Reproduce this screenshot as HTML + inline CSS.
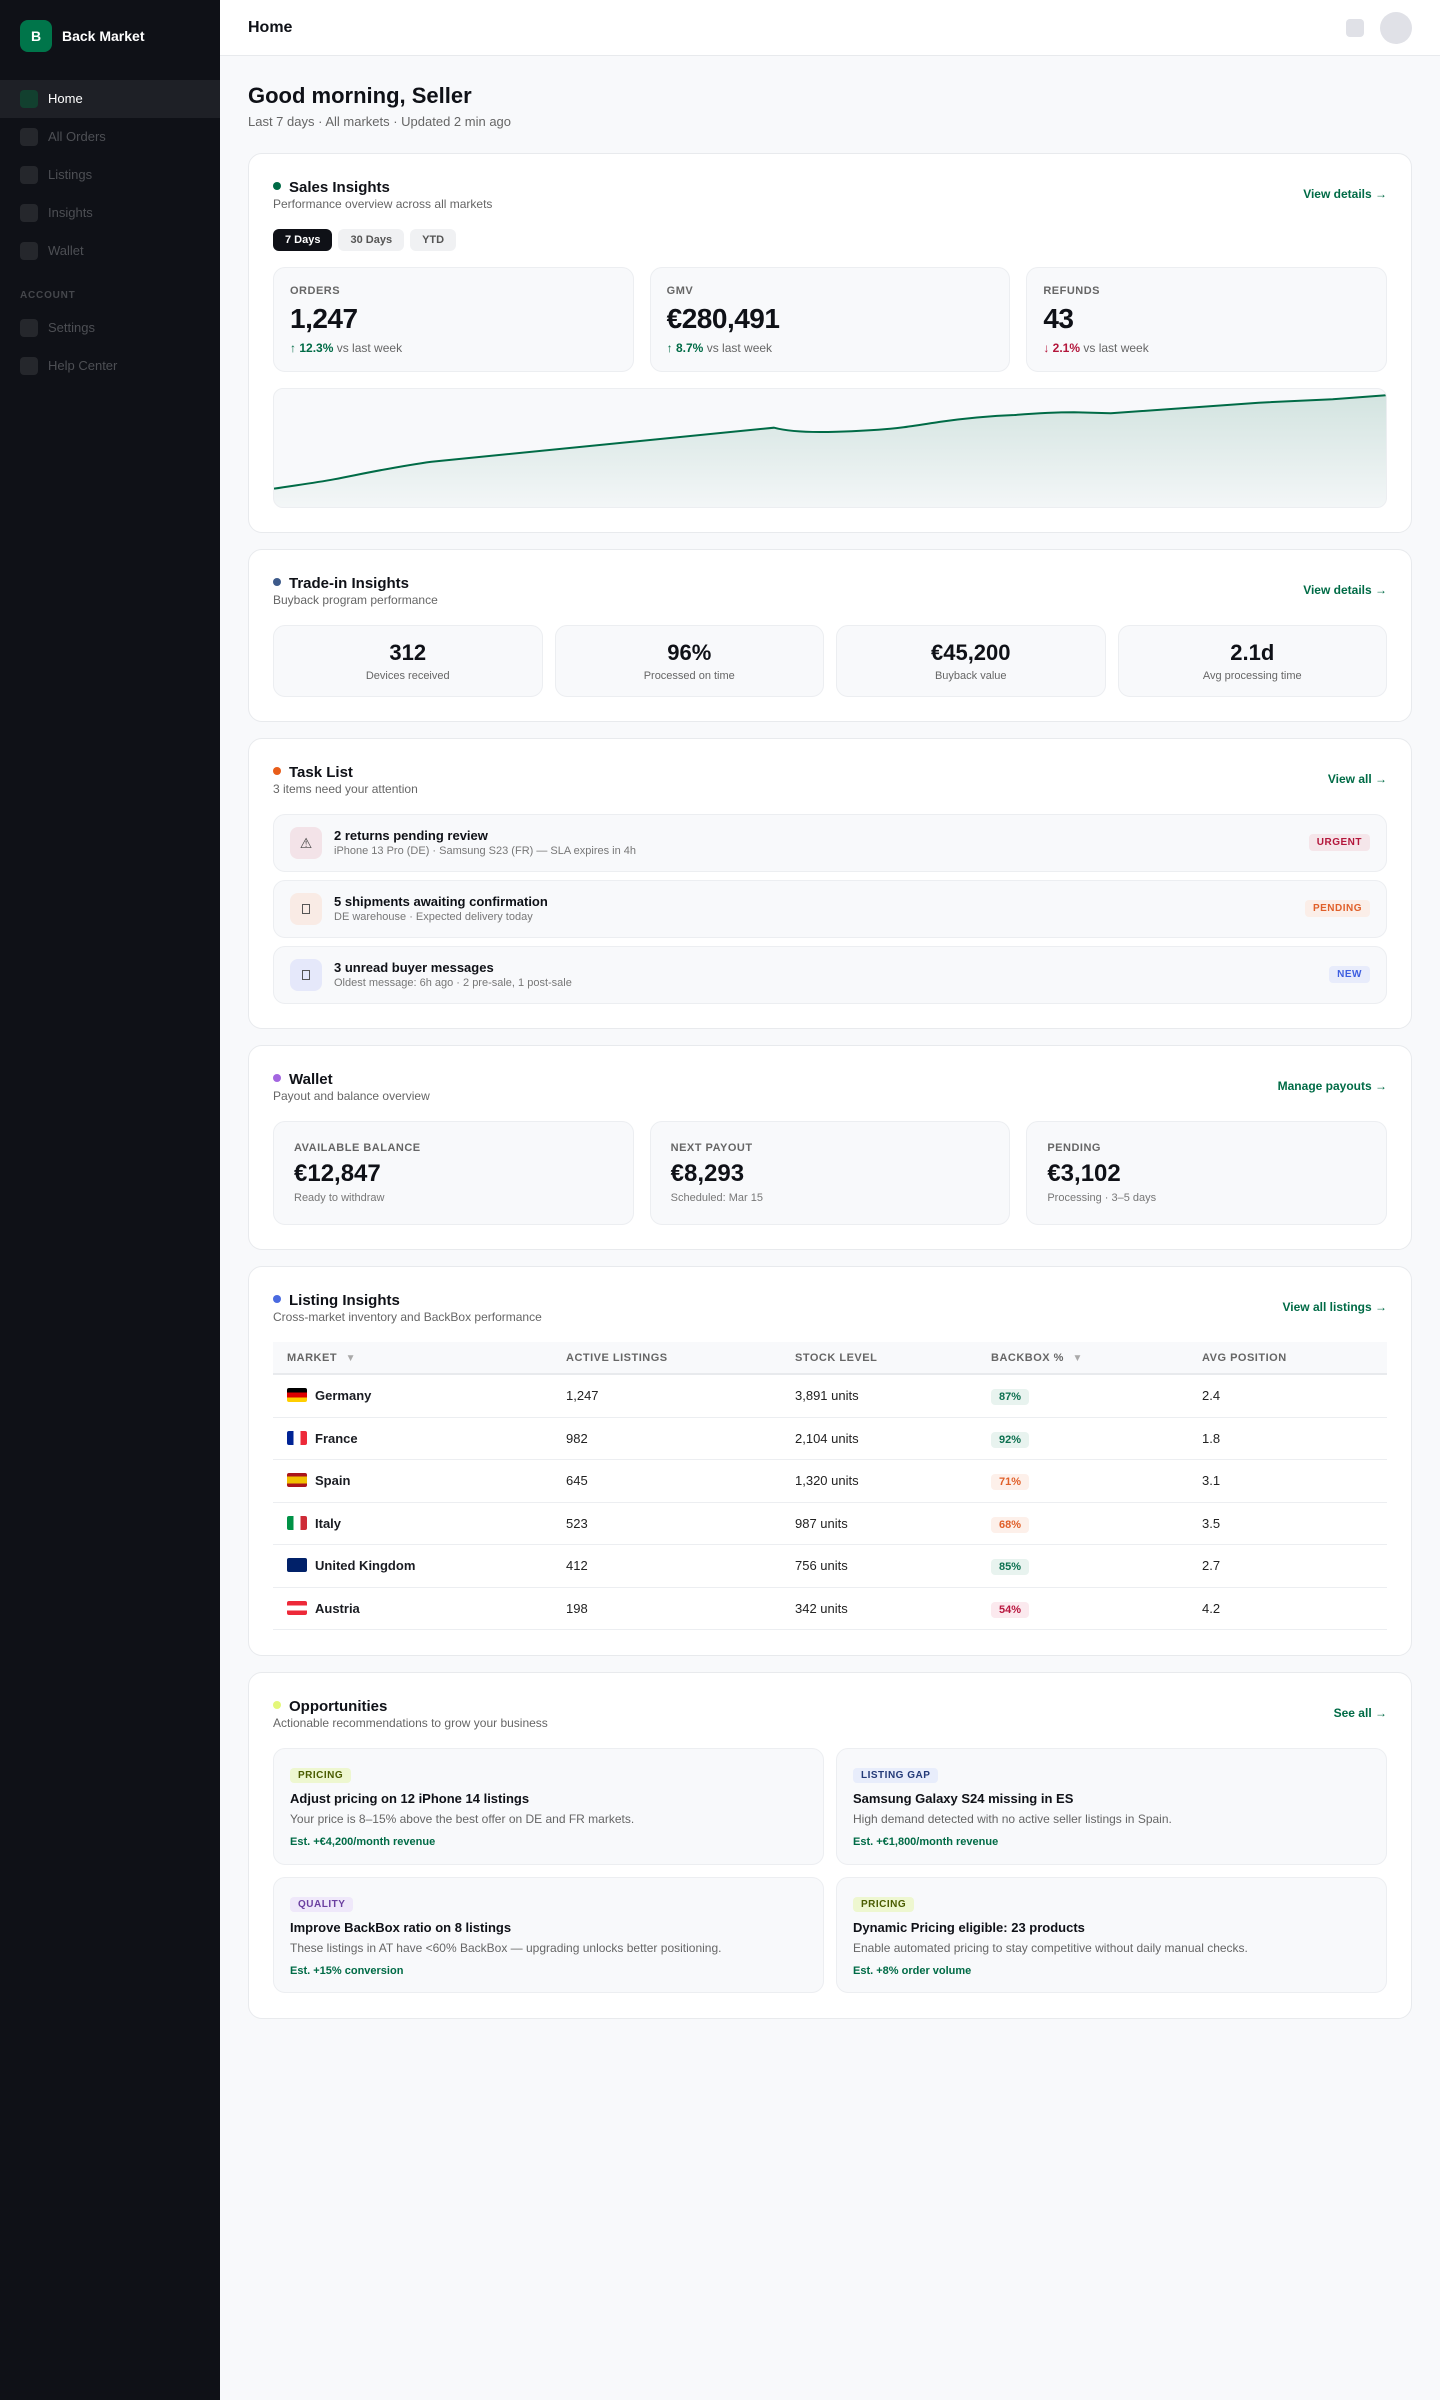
<!DOCTYPE html>
<html lang="en"><head><meta charset="utf-8"><title>Back Market</title>
<style>
*{box-sizing:border-box;margin:0;padding:0}
html,body{width:1440px;height:2400px;overflow:hidden;background:#f8f9fb;font-family:"Liberation Sans",Arial,sans-serif;color:#0f1117}
.side{position:absolute;left:0;top:0;width:220px;height:2400px;background:#0f1117}
.logo{position:absolute;left:20px;top:20px;width:32px;height:32px;border-radius:8px;background:#00754a;color:#fff;font:700 14px/32px "Liberation Sans",sans-serif;text-align:center}
.brand{position:absolute;left:62px;top:20px;line-height:32px;font-size:14px;font-weight:700;color:#fff}
.nav{position:absolute;left:0;width:220px;height:38px;font-size:13px;line-height:38px;color:#4d4f54;padding-left:48px}
.nav i{position:absolute;left:20px;top:10px;width:18px;height:18px;border-radius:4px;background:#25272c}
.nav.on{background:#1e2026;color:#fff}.nav.on i{background:#12402f}
.acc{position:absolute;left:20px;top:290px;font-size:10px;font-weight:700;letter-spacing:.8px;line-height:12px;color:#45474c}
.top{position:absolute;left:220px;top:0;width:1220px;height:56px;background:#fff;border-bottom:1px solid #e8eaed}
.top b{position:absolute;left:28px;top:0;font-size:16px;line-height:56px}
.top i{position:absolute;left:1126px;top:19px;width:18px;height:18px;border-radius:4px;background:#e0e1e7}
.top u{position:absolute;left:1160px;top:12px;width:32px;height:32px;border-radius:50%;background:#e0e1e7}
h1{position:absolute;left:248px;top:82px;font-size:22px;line-height:28px;font-weight:700}
.lead{position:absolute;left:248px;top:114px;font-size:13px;line-height:16px;color:#666}
.card{position:absolute;left:248px;width:1164px;background:#fff;border:1px solid #e8eaed;border-radius:14px;padding:24px}
.head{position:relative;height:35px;margin-bottom:16px}
.dot{position:absolute;left:0;top:4px;width:8px;height:8px;border-radius:50%}
.tt{position:absolute;left:16px;top:1px;font-size:15px;line-height:17px;font-weight:700}
.st{position:absolute;left:0;top:18px;font-size:12px;line-height:16px;color:#666}
.lnk{position:absolute;right:0;top:8px;font-size:12px;line-height:16px;font-weight:700;color:#006b46;white-space:nowrap}
.lnk span{font-weight:400}
.pills{display:flex;gap:6px;height:22px;margin-bottom:16px}
.pills span{height:22px;padding:0 12px;border-radius:6px;background:#f0f1f3;color:#555;font-size:11px;font-weight:700;line-height:22px}
.pills span.on{background:#0f1117;color:#fff}
.g3{display:grid;grid-template-columns:repeat(3,1fr);gap:16px}
.box{background:#f8f9fb;border:1px solid #eceef1;border-radius:12px;position:relative}
.m{height:105px;padding:16px}
.lbl{font-size:11px;font-weight:700;color:#666;letter-spacing:.5px;line-height:14px}
.val{font-size:28px;font-weight:700;letter-spacing:-.5px;line-height:34px;margin-top:4px}
.del{font-size:12px;color:#666;line-height:16px;margin-top:4px}
.del b{color:#006b46}.del b.r{color:#b3163b}.del s{text-decoration:none;color:#006b46}.del s.r{color:#b3163b}
.chart{height:120px;margin-top:16px;overflow:hidden;position:relative;border-radius:10px}
.chart svg{position:absolute;left:0;top:0}
.g4{display:grid;grid-template-columns:repeat(4,1fr);gap:12px}
.t{height:72px;text-align:center;padding-top:14px}
.t b{display:block;font-size:22px;line-height:26px}
.t span{display:block;font-size:11px;line-height:14px;color:#666;margin-top:3px}
.row{position:relative;height:58px;margin-bottom:8px}
.ic{position:absolute;left:16px;top:12px;width:32px;height:32px;border-radius:8px;text-align:center;font-size:14px;line-height:32px;color:#444}
.ic i{position:absolute;left:12px;top:11px;width:8px;height:10px;border:1px solid #555}
.rt{position:absolute;left:60px;top:13px;font-size:13px;font-weight:700;line-height:16px}
.rs{position:absolute;left:60px;top:29px;font-size:11px;line-height:14px;color:#777}
.bd{position:absolute;right:16px;top:19px;height:17px;padding:0 8px;border-radius:4px;font-size:10px;font-weight:700;letter-spacing:.5px;line-height:17px}
.w{height:104px;padding:19px 20px}
.w b{display:block;font-size:24px;line-height:28px;margin-top:5px}
.w span{display:block;font-size:11px;line-height:14px;color:#777;margin-top:3px}
.tb{position:relative;height:290px}
.th,.tr{position:absolute;left:0;width:1114px;font-size:13px}
.th{top:0;height:33px;background:#f8f9fb;border-bottom:2px solid #e8eaed;font-size:11px;font-weight:700;color:#666;letter-spacing:.5px;line-height:33px}
.tr{height:42.5px;border-bottom:1px solid #eceef1;line-height:42px;color:#222}
.th div,.tr div{position:absolute;top:0;white-space:nowrap}
.c1{left:14px}.c2{left:293px}.c3{left:522px}.c4{left:718px}.c5{left:929px}
.th em{font-style:normal;font-size:10px;color:#aaa;margin-left:5px;letter-spacing:0}
.tr .c1{font-weight:700;color:#1a1c22;padding-left:28px}
.fl{position:absolute;left:0;top:13px;width:20px;height:14px;border-radius:2px}
.pc{display:inline-block;height:16px;padding:0 8px;border-radius:4px;font-size:11px;font-weight:700;line-height:16px;vertical-align:0}
.gr{background:#e8f3ef;color:#0d7050}.or{background:#fdf0ea;color:#e0602a}.rd{background:#fbe9ee;color:#b8173f}
.g2{display:grid;grid-template-columns:1fr 1fr;column-gap:12px;row-gap:12px}
.o{height:116.5px;padding:19px 16px 0}
.tag{display:block;width:fit-content;height:15px;padding:0 8px;border-radius:4px;font-size:10px;font-weight:700;letter-spacing:.5px;line-height:15px}
.o h4{font-size:13px;line-height:16px;margin-top:8px}
.o p{font-size:12px;line-height:16px;color:#666;margin-top:4px}
.o small{display:block;font-size:11px;font-weight:700;color:#006b46;line-height:14px;margin-top:8px}
</style></head><body>
<div class="side">
<div class="logo">B</div><div class="brand">Back Market</div>
<div class="nav on" style="top:80px"><i></i>Home</div>
<div class="nav" style="top:118px"><i></i>All Orders</div>
<div class="nav" style="top:156px"><i></i>Listings</div>
<div class="nav" style="top:194px"><i></i>Insights</div>
<div class="nav" style="top:232px"><i></i>Wallet</div>
<div class="acc">ACCOUNT</div>
<div class="nav" style="top:309px"><i></i>Settings</div>
<div class="nav" style="top:347px"><i></i>Help Center</div>
</div>
<div class="top"><b>Home</b><i></i><u></u></div>
<h1>Good morning, Seller</h1>
<div class="lead">Last 7 days · All markets · Updated 2 min ago</div>

<div class="card" style="top:153px;height:380px">
<div class="head"><i class="dot" style="background:#006b46"></i><div class="tt">Sales Insights</div><div class="st">Performance overview across all markets</div><div class="lnk">View details <span>→</span></div></div>
<div class="pills"><span class="on">7 Days</span><span>30 Days</span><span>YTD</span></div>
<div class="g3">
<div class="box m"><div class="lbl">ORDERS</div><div class="val">1,247</div><div class="del"><s>↑</s> <b>12.3%</b> vs last week</div></div>
<div class="box m"><div class="lbl">GMV</div><div class="val">€280,491</div><div class="del"><s>↑</s> <b>8.7%</b> vs last week</div></div>
<div class="box m"><div class="lbl">REFUNDS</div><div class="val">43</div><div class="del"><s class="r">↓</s> <b class="r">2.1%</b> vs last week</div></div>
</div>
<div class="box chart">
<svg width="1112" height="118" viewBox="0 0 1112 118"><defs><linearGradient id="g" x1="0" y1="0" x2="0" y2="1"><stop offset="0" stop-color="#006b46" stop-opacity=".15"/><stop offset="1" stop-color="#006b46" stop-opacity=".02"/></linearGradient></defs>
<path d="M0 99.7C20 96.5 40 94 60 90.3C95 83.5 125 77 157.6 72.7L500 38.7C516 43 540 43.5 563 42.7C590 42 612 40.5 629.6 38.3C642 36.7 655 34.5 666.6 32.7C690 29.500 715 27 740.6 26C760 24.500 780 23.300 800 23.300L836.800 24.300L984.700 13.700L1058.700 10.300L1112 6.300V118H0Z" fill="url(#g)"/>
<path d="M0 99.7C20 96.5 40 94 60 90.3C95 83.5 125 77 157.6 72.7L500 38.7C516 43 540 43.5 563 42.7C590 42 612 40.5 629.6 38.3C642 36.7 655 34.5 666.6 32.7C690 29.500 715 27 740.6 26C760 24.500 780 23.300 800 23.300L836.800 24.300L984.700 13.700L1058.700 10.300L1112 6.300" fill="none" stroke="#006b46" stroke-width="2"/></svg>
</div>
</div>

<div class="card" style="top:549px;height:173px">
<div class="head"><i class="dot" style="background:#3d5a8a"></i><div class="tt">Trade-in Insights</div><div class="st">Buyback program performance</div><div class="lnk">View details <span>→</span></div></div>
<div class="g4">
<div class="box t"><b>312</b><span>Devices received</span></div>
<div class="box t"><b>96%</b><span>Processed on time</span></div>
<div class="box t"><b>€45,200</b><span>Buyback value</span></div>
<div class="box t"><b>2.1d</b><span>Avg processing time</span></div>
</div>
</div>

<div class="card" style="top:738px;height:291px">
<div class="head"><i class="dot" style="background:#e85d1a"></i><div class="tt">Task List</div><div class="st">3 items need your attention</div><div class="lnk">View all <span>→</span></div></div>
<div class="box row"><div class="ic" style="background:#f3e3e8">⚠</div><div class="rt">2 returns pending review</div><div class="rs">iPhone 13 Pro (DE) · Samsung S23 (FR) — SLA expires in 4h</div><div class="bd" style="background:#f5e6ea;color:#b3163b">URGENT</div></div>
<div class="box row"><div class="ic" style="background:#f9ebe5"><i></i></div><div class="rt">5 shipments awaiting confirmation</div><div class="rs">DE warehouse · Expected delivery today</div><div class="bd" style="background:#fbeee8;color:#e0602a">PENDING</div></div>
<div class="box row"><div class="ic" style="background:#e5e8fa"><i></i></div><div class="rt">3 unread buyer messages</div><div class="rs">Oldest message: 6h ago · 2 pre-sale, 1 post-sale</div><div class="bd" style="background:#e8ecfb;color:#3f5fe0">NEW</div></div>
</div>

<div class="card" style="top:1045px;height:205px">
<div class="head"><i class="dot" style="background:#a366e0"></i><div class="tt">Wallet</div><div class="st">Payout and balance overview</div><div class="lnk">Manage payouts <span>→</span></div></div>
<div class="g3">
<div class="box w"><div class="lbl">AVAILABLE BALANCE</div><b>€12,847</b><span>Ready to withdraw</span></div>
<div class="box w"><div class="lbl">NEXT PAYOUT</div><b>€8,293</b><span>Scheduled: Mar 15</span></div>
<div class="box w"><div class="lbl">PENDING</div><b>€3,102</b><span>Processing · 3–5 days</span></div>
</div>
</div>

<div class="card" style="top:1266px;height:390px">
<div class="head"><i class="dot" style="background:#4a6ae0"></i><div class="tt">Listing Insights</div><div class="st">Cross-market inventory and BackBox performance</div><div class="lnk">View all listings <span>→</span></div></div>
<div class="tb">
<div class="th"><div class="c1">MARKET <em>▼</em></div><div class="c2">ACTIVE LISTINGS</div><div class="c3">STOCK LEVEL</div><div class="c4">BACKBOX % <em>▼</em></div><div class="c5">AVG POSITION</div></div>
<div class="tr" style="top:33px"><div class="c1"><i class="fl" style="background:linear-gradient(#000 33.3%,#dd0000 33.3% 66.6%,#ffce00 66.6%)"></i>Germany</div><div class="c2">1,247</div><div class="c3">3,891 units</div><div class="c4"><span class="pc gr">87%</span></div><div class="c5">2.4</div></div>
<div class="tr" style="top:75.5px"><div class="c1"><i class="fl" style="background:linear-gradient(90deg,#002395 33.3%,#fff 33.3% 66.6%,#ed2939 66.6%)"></i>France</div><div class="c2">982</div><div class="c3">2,104 units</div><div class="c4"><span class="pc gr">92%</span></div><div class="c5">1.8</div></div>
<div class="tr" style="top:118px"><div class="c1"><i class="fl" style="background:linear-gradient(#aa151b 25%,#f1bf00 25% 75%,#aa151b 75%)"></i>Spain</div><div class="c2">645</div><div class="c3">1,320 units</div><div class="c4"><span class="pc or">71%</span></div><div class="c5">3.1</div></div>
<div class="tr" style="top:160.5px"><div class="c1"><i class="fl" style="background:linear-gradient(90deg,#009246 33.3%,#fff 33.3% 66.6%,#ce2b37 66.6%)"></i>Italy</div><div class="c2">523</div><div class="c3">987 units</div><div class="c4"><span class="pc or">68%</span></div><div class="c5">3.5</div></div>
<div class="tr" style="top:203px"><div class="c1"><i class="fl" style="background:#012169"></i>United Kingdom</div><div class="c2">412</div><div class="c3">756 units</div><div class="c4"><span class="pc gr">85%</span></div><div class="c5">2.7</div></div>
<div class="tr" style="top:245.5px"><div class="c1"><i class="fl" style="background:linear-gradient(#ed2939 33.3%,#fff 33.3% 66.6%,#ed2939 66.6%)"></i>Austria</div><div class="c2">198</div><div class="c3">342 units</div><div class="c4"><span class="pc rd">54%</span></div><div class="c5">4.2</div></div>
</div>
</div>

<div class="card" style="top:1672px;height:347px">
<div class="head"><i class="dot" style="background:#e4f77a"></i><div class="tt">Opportunities</div><div class="st">Actionable recommendations to grow your business</div><div class="lnk">See all <span>→</span></div></div>
<div class="g2">
<div class="box o"><span class="tag" style="background:#eef7d0;color:#4a5c00">PRICING</span><h4>Adjust pricing on 12 iPhone 14 listings</h4><p>Your price is 8–15% above the best offer on DE and FR markets.</p><small>Est. +€4,200/month revenue</small></div>
<div class="box o"><span class="tag" style="background:#e8edfb;color:#233a78">LISTING GAP</span><h4>Samsung Galaxy S24 missing in ES</h4><p>High demand detected with no active seller listings in Spain.</p><small>Est. +€1,800/month revenue</small></div>
<div class="box o"><span class="tag" style="background:#efe8fa;color:#6b3fa0">QUALITY</span><h4>Improve BackBox ratio on 8 listings</h4><p>These listings in AT have &lt;60% BackBox — upgrading unlocks better positioning.</p><small>Est. +15% conversion</small></div>
<div class="box o"><span class="tag" style="background:#eef7d0;color:#4a5c00">PRICING</span><h4>Dynamic Pricing eligible: 23 products</h4><p>Enable automated pricing to stay competitive without daily manual checks.</p><small>Est. +8% order volume</small></div>
</div>
</div>
</body></html>
